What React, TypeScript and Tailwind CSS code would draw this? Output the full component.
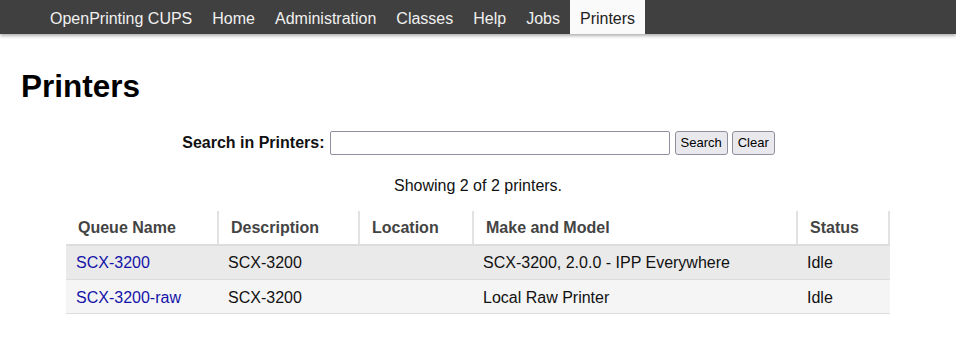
import React from "react";

const navItems = ["OpenPrinting CUPS", "Home", "Administration", "Classes", "Help", "Jobs", "Printers"];

const rows = [
  { name: "SCX-3200", desc: "SCX-3200", loc: "", model: "SCX-3200, 2.0.0 - IPP Everywhere", status: "Idle", bg: "bg-[#eaeaea]", pad: "pt-[8px] pb-[7px]" },
  { name: "SCX-3200-raw", desc: "SCX-3200", loc: "", model: "Local Raw Printer", status: "Idle", bg: "bg-[#f5f5f5]", pad: "pt-[9px] pb-[6px]" },
];

export default function App() {
  return (
    <div className="min-h-[355px] bg-white text-[16px] text-[#111] font-['Liberation_Sans',Arial,sans-serif]">
      <div className="h-[34px] bg-[#404040] shadow-[0_2px_3px_rgba(0,0,0,0.3)] flex pl-[40px]">
        {navItems.map((n) => (
          <div
            key={n}
            className={
              n === "Printers"
                ? "h-[34px] px-[10px] pt-[10px] leading-[18px] bg-[#fafafa] text-[#222]"
                : "h-[34px] px-[10px] pt-[10px] leading-[18px] text-[#f0f0f0]"
            }
          >
            {n}
          </div>
        ))}
      </div>

      <h1 className="mt-[33px] ml-[21px] text-[31.5px] leading-[38px] font-bold text-black">Printers</h1>

      <div className="mt-[26px] flex justify-center items-center h-[24px] pl-[1px]">
        <span className="font-bold leading-[18px]">Search in Printers:</span>
        <div className="ml-[5px] w-[340px] h-[24px] border border-[#8f8f9d] rounded-[2px] bg-white" />
        <div className="ml-[5px] h-[24px] px-[5px] flex items-center border border-[#8f8f9d] rounded-[3px] bg-[#e9e9ed] text-[13px] text-black">Search</div>
        <div className="ml-[4px] h-[24px] px-[5px] flex items-center border border-[#8f8f9d] rounded-[3px] bg-[#e9e9ed] text-[13px] text-black">Clear</div>
      </div>

      <p className="mt-[22px] text-center leading-[18px]">Showing 2 of 2 printers.</p>

      <table className="mt-[15px] ml-[66px] w-[824px] table-fixed border-collapse">
        <colgroup>
          <col className="w-[153px]" />
          <col className="w-[141px]" />
          <col className="w-[114px]" />
          <col className="w-[324px]" />
          <col className="w-[92px]" />
        </colgroup>
        <thead>
          <tr className="border-b-2 border-[#dddddd]">
            {["Queue Name", "Description", "Location", "Make and Model", "Status"].map((h) => (
              <th key={h} className="p-0 text-left font-bold text-[#444]">
                <div className="h-[33px] mt-[1px] border-r-2 border-[#e2e2e2] pl-[12px] pt-[8px] leading-[18px]">{h}</div>
              </th>
            ))}
          </tr>
        </thead>
        <tbody>
          {rows.map((r) => (
            <tr key={r.name} className={`${r.bg} border-b border-[#dddddd]`}>
              <td className={`h-[33px] pl-[10px] ${r.pad} leading-[18px] align-top text-[#1414a8]`}>{r.name}</td>
              <td className={`pl-[9px] ${r.pad} leading-[18px] align-top`}>{r.desc}</td>
              <td className={`pl-[9px] ${r.pad} leading-[18px] align-top`}>{r.loc}</td>
              <td className={`pl-[9px] ${r.pad} leading-[18px] align-top`}>{r.model}</td>
              <td className={`pl-[9px] ${r.pad} leading-[18px] align-top`}>{r.status}</td>
            </tr>
          ))}
        </tbody>
      </table>
    </div>
  );
}
